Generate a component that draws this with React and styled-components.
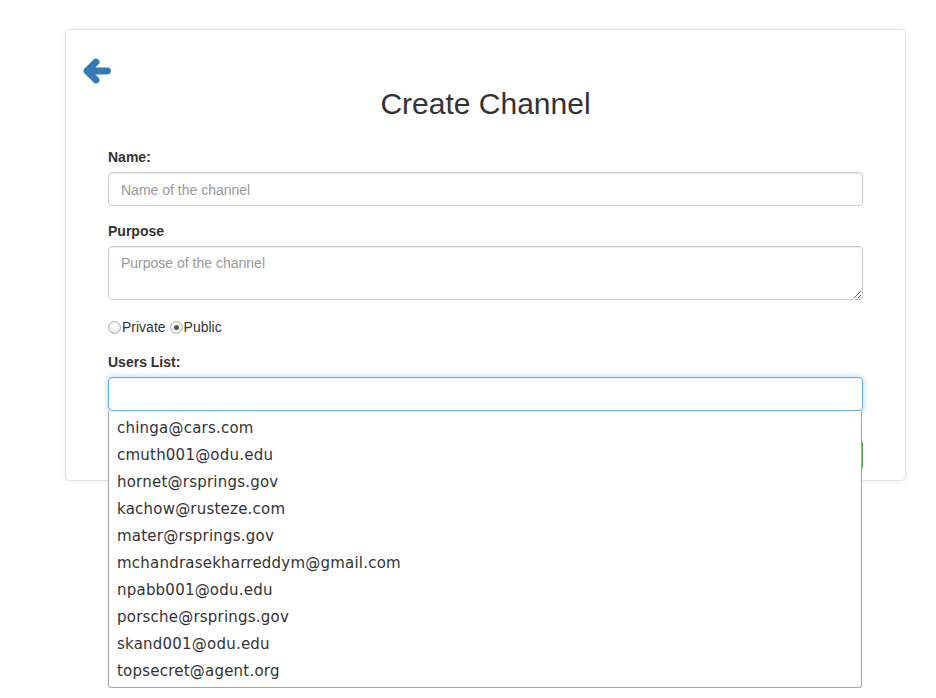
import React from 'react';
import styled, { createGlobalStyle } from 'styled-components';

/*********************************** Styles ***********************************/
const GlobalStyle = createGlobalStyle`
  body {
    margin: 0;
    background: #fff;
    font-family: "Liberation Sans", Arial, sans-serif;
    font-size: 14px;
    color: #333;
  }
`;

const Page = styled.div`
  width: 936px;
  height: 698px;
  overflow: hidden;
  padding: 29px 0 0 65px;
  box-sizing: border-box;
`;

const Card = styled.div`
  width: 841px;
  box-sizing: border-box;
  border: 1px solid #e3e3e3;
  border-radius: 5px;
  box-shadow: 0 1px 4px rgba(0, 0, 0, 0.08);
  background: #fff;
  padding: 28px 42px 10px 17px;
`;

const BackLink = styled.a`
  display: block;
  width: 28px;
  height: 26px;
  cursor: pointer;
`;

const Title = styled.h2`
  margin: 3px 0 0 25px;
  font-size: 30px;
  font-weight: 500;
  line-height: 33px;
  text-align: center;
  color: #333;
`;

const Form = styled.form`
  margin: 27px 0 0 25px;
`;

const Group = styled.div`
  position: relative;
  margin-bottom: ${props => props.gap || 15}px;
`;

const Label = styled.label`
  display: block;
  font-weight: bold;
  line-height: 20px;
  margin-bottom: 5px;
`;

const Input = styled.input`
  display: block;
  width: 100%;
  height: 34px;
  box-sizing: border-box;
  padding: 6px 12px 5px;
  font: 14px "Liberation Sans", Arial, sans-serif;
  color: #555;
  border: 1px solid ${props => (props.focused ? '#66afe9' : '#ccc')};
  border-radius: 4px;
  outline: none;
  box-shadow: ${props => props.focused
    ? 'inset 0 1px 1px rgba(0,0,0,.075), 0 0 6px rgba(102,175,233,.6)'
    : 'inset 0 1px 1px rgba(0,0,0,.075)'};

  &::placeholder {
    color: #999;
  }
`;

const TextArea = styled.textarea`
  display: block;
  width: 100%;
  height: 54px;
  box-sizing: border-box;
  padding: 8px 12px 6px;
  font: 14px "Liberation Sans", Arial, sans-serif;
  border: 1px solid #ccc;
  border-radius: 4px;
  box-shadow: inset 0 1px 1px rgba(0,0,0,.075);
  outline: none;
  resize: vertical;

  &::placeholder {
    color: #999;
  }
`;

const RadioRow = styled.div`
  display: flex;
  align-items: center;
  line-height: 20px;
  margin-bottom: 15px;
`;

const RadioLabel = styled.label`
  display: flex;
  align-items: center;
  margin-right: 4px;
  color: #333;
`;

const Radio = styled.span`
  width: 11px;
  height: 11px;
  border-radius: 50%;
  border: 1px solid #b0b0b0;
  background: radial-gradient(circle at 50% 35%, #fff 0%, #ececec 70%, #dadada 100%);
  display: flex;
  align-items: center;
  justify-content: center;
  margin: 1px 1px 0 0;

  &::after {
    content: '';
    width: 5px;
    height: 5px;
    border-radius: 50%;
    background: ${props => (props.checked ? '#555' : 'transparent')};
  }
`;

const ButtonRow = styled.div`
  display: flex;
  justify-content: flex-end;
  margin-top: 29px;
`;

const SubmitButton = styled.button`
  height: 30px;
  padding: 5px 12px;
  font: 14px "Liberation Sans", Arial, sans-serif;
  color: #fff;
  background: #5cb85c;
  border: 1px solid #4cae4c;
  border-radius: 3px;
`;

const Suggestions = styled.ul`
  position: absolute;
  top: 100%;
  left: 0;
  width: 754px;
  box-sizing: border-box;
  margin: 0;
  padding: 4px 0 2px;
  list-style: none;
  background: #fff;
  border: 1px solid #a6a6a6;
  border-top: none;
  border-radius: 0 0 3px 3px;
  z-index: 10;
`;

const Suggestion = styled.li`
  height: 27px;
  padding-left: 8px;
  font: 15px "DejaVu Sans", Verdana, sans-serif;
  letter-spacing: 0.22px;
  line-height: 27px;
  color: #333;
`;

/*********************************** Component ***********************************/
const users = [
  'chinga@cars.com',
  'cmuth001@odu.edu',
  'hornet@rsprings.gov',
  'kachow@rusteze.com',
  'mater@rsprings.gov',
  'mchandrasekharreddym@gmail.com',
  'npabb001@odu.edu',
  'porsche@rsprings.gov',
  'skand001@odu.edu',
  'topsecret@agent.org',
];

const BackArrow = () => (
  <svg width="28" height="26" viewBox="0 0 28 26">
    <path
      d="M13 4 L4 13 L13 22 M4 13 L24.5 13"
      fill="none"
      stroke="#337ab7"
      strokeWidth="6.8"
      strokeLinecap="round"
      strokeLinejoin="round"
    />
  </svg>
);

export default function App() {
  return (
    <Page>
      <GlobalStyle />
      <Card>
        <BackLink><BackArrow /></BackLink>
        <Title>Create Channel</Title>
        <Form onSubmit={e => e.preventDefault()}>
          <Group>
            <Label>Name:</Label>
            <Input placeholder="Name of the channel" />
          </Group>
          <Group gap={17}>
            <Label>Purpose</Label>
            <TextArea placeholder="Purpose of the channel" />
          </Group>
          <RadioRow>
            <RadioLabel><Radio />Private</RadioLabel>
            <RadioLabel><Radio checked />Public</RadioLabel>
          </RadioRow>
          <Label>Users List:</Label>
          <Group gap={0}>
            <Input focused />
            <Suggestions>
              {users.map(u => <Suggestion key={u}>{u}</Suggestion>)}
            </Suggestions>
          </Group>
          <ButtonRow>
            <SubmitButton>Create</SubmitButton>
          </ButtonRow>
        </Form>
      </Card>
    </Page>
  );
}
